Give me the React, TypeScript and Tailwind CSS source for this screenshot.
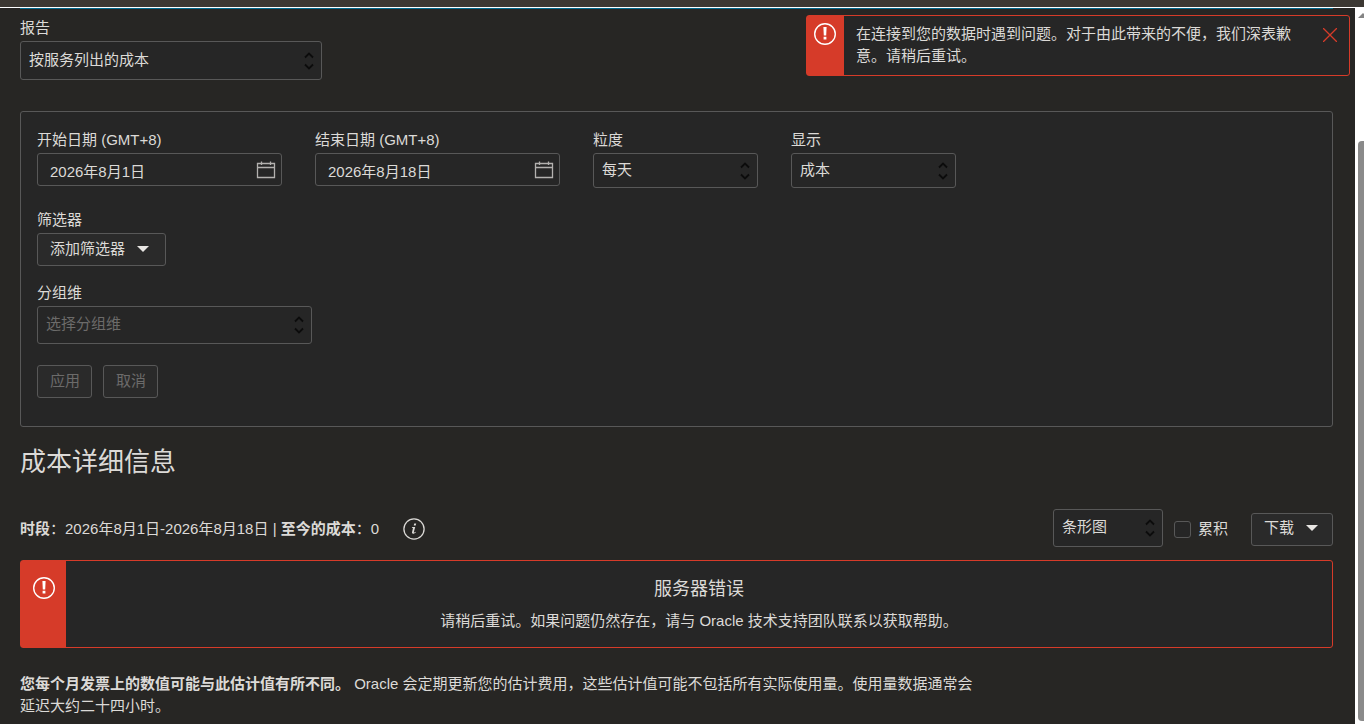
import { useState } from 'react';
import type { ReactNode } from 'react';
import clsx from 'clsx';

const BUTTON =
  'flex items-center whitespace-nowrap rounded-[3px] border border-[#585858] bg-[#2a2a2a] h-[33px] pl-3 pb-0.5';

function ErrorIcon() {
  return (
    <svg width="24" height="24" viewBox="0 0 24 24" fill="none" aria-hidden="true">
      <circle cx="12" cy="12" r="10.3" stroke="#fff" strokeWidth="1.4" />
      <path d="M10.4 5h3.2l-.4 8.500h-2.400zM10.6 14.800h2.800v2.800h-2.800z" fill="#fff" />
    </svg>
  );
}

function InfoIcon() {
  return (
    <svg width="22" height="22" viewBox="0 0 22 22" fill="none" aria-hidden="true">
      <circle cx="11" cy="11" r="10.1" stroke="#dcdad7" strokeWidth="1.3" />
      <path d="M11.2 5.4h2l-.5 2h-2zM9.2 9h3l-1.400 5.300c0 .6.7.3 1.500-.6l.5.5c-1.400 1.800-4.200 2.100-3.800.1L10 10l-1.200-.3z" fill="#dcdad7" />
    </svg>
  );
}

function CalendarIcon() {
  return (
    <svg width="20" height="18" viewBox="0 0 20 18" fill="none" stroke="#b3b1af" strokeWidth="1.3" aria-hidden="true">
      <path d="M1.500 2.500h17v14h-17zM1.500 6.500h17M5.500 .5v3.500M14.500 .5v3.500" />
    </svg>
  );
}

function Caret() {
  return (
    <svg className="ml-3" width="12" height="6" viewBox="0 0 12 6" aria-hidden="true">
      <path d="M0 0h12L6 6z" fill="#e8e6e3" />
    </svg>
  );
}

interface SelectProps {
  id: string;
  options: string[];
  className: string;
  muted?: boolean;
  label?: string;
}

function Select({ id, options, className, muted, label }: SelectProps) {
  return (
    <div className={clsx('relative', className)}>
      <select
        id={id}
        aria-label={label}
        className={clsx(
          'size-full appearance-none rounded-[3px] border border-[#585858] bg-[#262626] pl-2 pr-6 pb-0.5',
          muted && 'text-[#6c6b6a]',
        )}
      >
        {options.map(o => <option key={o}>{o}</option>)}
      </select>
      <svg
        className="pointer-events-none absolute inset-y-0 right-2 my-auto"
        width="10" height="18" viewBox="0 0 10 18" fill="none" stroke="#0c0c0c" strokeWidth="1.8" aria-hidden="true"
      >
        <path d="M1 5.500L5 1.500L9 5.500M1 12.500L5 16.500L9 12.500" />
      </svg>
    </div>
  );
}

function Field({ id, label, children }: { id: string; label: string; children: ReactNode }) {
  return (
    <div className="flex flex-col items-start">
      <label htmlFor={id} className="mb-0.5 leading-[22px]">{label}</label>
      {children}
    </div>
  );
}

function DateInput({ id, value }: { id: string; value: string }) {
  return (
    <div className="flex h-[33px] w-[245px] items-center rounded-[3px] border border-[#585858] bg-[#262626] pl-3 pr-[5px]">
      <input id={id} type="text" defaultValue={value} className="h-full min-w-0 flex-1 bg-transparent pt-0.5 outline-none" />
      <button type="button" aria-label="选择日期"><CalendarIcon /></button>
    </div>
  );
}

export default function App() {
  const [toast, setToast] = useState(true);

  return (
    <div className="flex min-h-screen flex-col bg-[#272624] font-['Liberation_Sans','Noto_Sans_CJK_SC',sans-serif] text-[15px] leading-[22px] text-[#dcdad7]">
      <div className="h-2 border-b border-white bg-[#3c3833]" />
      <div className="relative flex flex-1">
        <main className="min-w-0 flex-1 pl-5 pr-[22px]">
          <div className="h-px bg-[#00688c]" />

          <div className="mt-2">
            <Field id="report" label="报告">
              <Select id="report" options={['按服务列出的成本']} className="h-[39px] w-[302px]" />
            </Field>
          </div>

          <section className="mt-[31px] rounded-[3px] border border-[#585858] bg-[#262626] px-4 pb-7 pt-[17px]">
            <div className="flex flex-wrap items-start gap-x-[33px] gap-y-4">
              <Field id="start" label="开始日期 (GMT+8)">
                <DateInput id="start" value="2026年8月1日" />
              </Field>
              <Field id="end" label="结束日期 (GMT+8)">
                <DateInput id="end" value="2026年8月18日" />
              </Field>
              <Field id="granularity" label="粒度">
                <Select id="granularity" options={['每天']} className="h-[35px] w-[165px]" />
              </Field>
              <Field id="show" label="显示">
                <Select id="show" options={['成本']} className="h-[35px] w-[165px]" />
              </Field>
            </div>

            <div className="mt-[21px]">
              <Field id="filters" label="筛选器">
                <button id="filters" type="button" className={clsx(BUTTON, 'w-[129px]')}>
                  添加筛选器
                  <Caret />
                </button>
              </Field>
            </div>

            <div className="mt-4">
              <Field id="group" label="分组维">
                <Select id="group" options={['选择分组维']} muted className="h-[38px] w-[275px]" />
              </Field>
            </div>

            <div className="mt-[21px] flex gap-[11px]">
              <button type="button" disabled className={clsx(BUTTON, 'w-[55px] text-[#6c6b6a]')}>应用</button>
              <button type="button" disabled className={clsx(BUTTON, 'w-[55px] text-[#6c6b6a]')}>取消</button>
            </div>
          </section>

          <h2 className="mt-[17px] text-[26px] leading-9">成本详细信息</h2>

          <div className="mt-[29px] flex items-center justify-between">
            <div className="flex items-center pt-0.5">
              <p className="mr-6">
                <b>时段</b>：2026年8月1日-2026年8月18日 | <b>至今的成本</b>：0
              </p>
              <button type="button" aria-label="信息"><InfoIcon /></button>
            </div>
            <div className="flex items-center">
              <Select id="chart" label="图表类型" options={['条形图']} className="h-[38px] w-[110px]" />
              <div className="flex items-center pt-0.5">
                <input
                  id="cumulative"
                  type="checkbox"
                  className="ml-[11px] size-[17px] appearance-none rounded-[3px] border border-[#585858] bg-[#262626] checked:bg-[#8a8a8a]"
                />
                <label htmlFor="cumulative" className="ml-[7px] mr-[23px]">累积</label>
                <button type="button" className={clsx(BUTTON, 'w-[82px]')}>
                  下载
                  <Caret />
                </button>
              </div>
            </div>
          </div>

          <div role="alert" className="mt-[13px] flex h-[88px] rounded-[3px] border border-[#d63b29] bg-[#262626]">
            <div className="flex w-[45px] shrink-0 justify-center bg-[#d63b29] pt-[15px]">
              <ErrorIcon />
            </div>
            <div className="flex-1 pt-[17px] text-center">
              <h3 className="text-lg leading-[22px]">服务器错误</h3>
              <p className="mt-2.5">请稍后重试。如果问题仍然存在，请与 Oracle 技术支持团队联系以获取帮助。</p>
            </div>
          </div>

          <p className="mt-[25px] max-w-[960px]">
            <b>您每个月发票上的数值可能与此估计值有所不同。</b>{' '}
            Oracle 会定期更新您的估计费用，这些估计值可能不包括所有实际使用量。使用量数据通常会延迟大约二十四小时。
          </p>
        </main>

        <div className="flex w-[9px] shrink-0 flex-col items-end bg-white pb-[3px] pt-[5px]" aria-hidden="true">
          <svg width="6" height="5" viewBox="0 0 6 5"><path d="M0 5L5 0L6 1V5z" fill="#858585" /></svg>
          <div className="mt-[123px] w-1.5 flex-1 rounded-l-[4px] bg-[#8a8a8a]" />
        </div>

        {toast && (
          <div role="alert" className="absolute right-3.5 top-[7px] flex w-[544px] rounded-[3px] border border-[#d63b29] bg-[#262626]">
            <div className="flex w-[37px] shrink-0 justify-center bg-[#d63b29] pr-0.5 pt-1.5">
              <ErrorIcon />
            </div>
            <p className="w-[460px] pb-2 pl-3 pt-[7px]">
              在连接到您的数据时遇到问题。对于由此带来的不便，我们深表歉意。请稍后重试。
            </p>
            <button type="button" aria-label="关闭" onClick={() => setToast(false)} className="ml-auto mr-3 mt-3 self-start">
              <svg width="14" height="14" viewBox="0 0 14 14" stroke="#d63b29" strokeWidth="1.3" aria-hidden="true">
                <path d="M0 0L14 14M14 0L0 14" />
              </svg>
            </button>
          </div>
        )}
      </div>
    </div>
  );
}
